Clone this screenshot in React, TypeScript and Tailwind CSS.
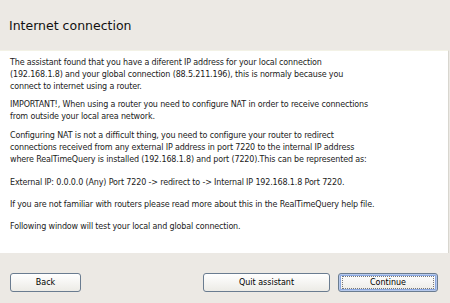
export default function App() {
  const paragraphs = [
    {
      lines: [
        'The assistant found that you have a diferent IP address for your local connection',
        '(192.168.1.8) and your global connection (88.5.211.196), this is normaly because you',
        'connect to internet using a router.',
      ],
      gap: '',
    },
    {
      lines: [
        'IMPORTANT!, When using a router you need to configure NAT in order to receive connections',
        'from outside your local area network.',
      ],
      gap: 'mt-[6px]',
    },
    {
      lines: [
        'Configuring NAT is not a difficult thing, you need to configure your router to redirect',
        'connections received from any external IP address in port 7220 to the internal IP address',
        'where RealTimeQuery is installed (192.168.1.8) and port (7220).This can be represented as:',
      ],
      gap: 'mt-[7px]',
    },
    { lines: ['External IP: 0.0.0.0 (Any) Port 7220 -> redirect to -> Internal IP 192.168.1.8 Port 7220.'], gap: 'mt-[11px]' },
    { lines: ['If you are not familiar with routers please read more about this in the RealTimeQuery help file.'], gap: 'mt-[10px]' },
    { lines: ['Following window will test your local and global connection.'], gap: 'mt-[10px]' },
  ];

  return (
    <div className="w-[450px] h-[303px] bg-[#ece9e4] flex flex-col font-['DejaVu_Sans',sans-serif] text-[#1b1b1b] overflow-hidden">
      <div className="h-[50px] flex items-center px-[9px] pt-[3px]">
        <h1 className="text-[12.5px] text-[#111]">Internet connection</h1>
      </div>

      <div className="h-[203px] w-[449px] bg-white border-t border-[#f3f2e6] border-r border-r-[#d8d6cf] px-[10px] pt-[6px] flex flex-col">
        {paragraphs.map((p, i) => (
          <p key={i} className={`${p.gap} text-[8px] leading-[12px] tracking-[-0.15px] whitespace-nowrap`}>
            {p.lines.map((line, j) => (
              <span key={j} className="block">
                {line}
              </span>
            ))}
          </p>
        ))}
      </div>

      <div className="flex-1 flex items-start pt-[20px] pl-[10px] pr-[12px]">
        <WinButton className="w-[71px]">Back</WinButton>
        <div className="ml-auto flex gap-[8px]">
          <WinButton className="w-[127px]">Quit assistant</WinButton>
          <WinButton className="w-[100px]" focused>
            Continue
          </WinButton>
        </div>
      </div>
    </div>
  );
}

function WinButton({
  children,
  className = '',
  focused = false,
}: {
  children: React.ReactNode;
  className?: string;
  focused?: boolean;
}) {
  return (
    <button
      className={`${className} h-[19px] rounded-[3px] border border-[#6a7c90] bg-gradient-to-b from-white to-[#ecebe6] text-[8px] text-black flex items-center justify-center ${
        focused ? 'shadow-[inset_0_0_0_1px_#b7c9ec,inset_0_0_0_2px_#8aa8e0]' : ''
      }`}
    >
      {focused ? (
        <span className="flex items-center justify-center w-[92px] h-[13px] border border-dotted border-[#777]">
          {children}
        </span>
      ) : (
        children
      )}
    </button>
  );
}
